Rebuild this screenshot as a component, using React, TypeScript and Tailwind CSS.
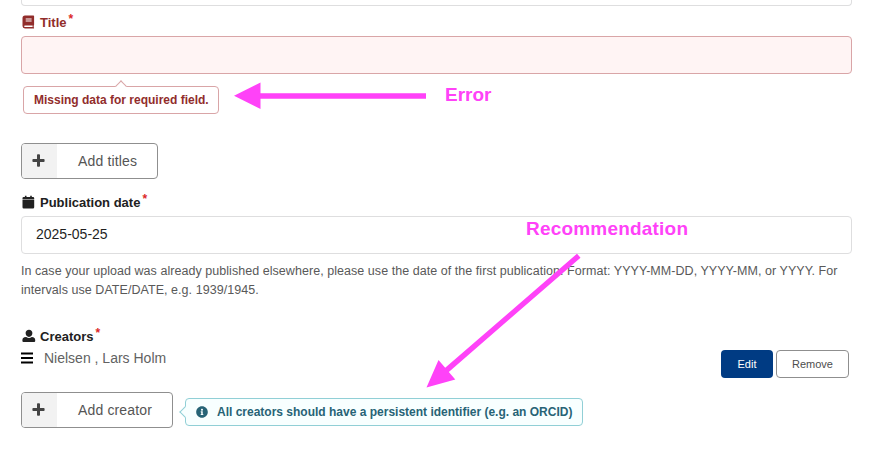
import type { ReactNode } from "react";
import { FaInfoCircle } from "react-icons/fa";

function BookIcon() {
  return (
    <svg width="13" height="14" viewBox="0 0 13 14" fill="currentColor">
      <path fillRule="evenodd" d="M3 .5H11.4Q12.1.5 12.1 1.2V9.8Q12.1 10.3 11.7 10.5V12.2Q12.1 12.4 12.1 12.9T11.5 13.4H3Q.5 13.4.5 11V3Q.5.5 3 .5ZM3.7 3.6V4.5H9.6V3.6ZM3.7 5.6V6.4H9.6V5.6ZM3 10.5Q2.1 10.5 2.1 11.2T3 12H10.6V10.5Z" />
    </svg>
  );
}

function CalendarIcon() {
  return (
    <svg width="13" height="14" viewBox="0 0 13 14" fill="currentColor">
      <path d="M.5 4.6H12.2V12.2Q12.2 13.4 11 13.4H1.7Q.5 13.4.5 12.2ZM.5 3.9V3Q.5 2 1.7 2H2.9V.8H4.5V2H8.2V.8H9.8V2H11Q12.2 2 12.2 3V3.9Z" />
    </svg>
  );
}

function UserIcon() {
  return (
    <svg width="14" height="14" viewBox="0 0 14 14" fill="currentColor">
      <path d="M7 .7C9 .7 10.4 2.2 10.4 4.1S9 8 7 8 3.6 6 3.6 4.1 5 .7 7 .7ZM4.2 7.9Q7 9.9 9.8 7.9L11.3 8.3Q13.2 8.8 13.2 10.8V12Q13.2 13 12.2 13H1.4Q.4 13 .4 12V10.8Q.4 8.8 2.3 8.3Z" />
    </svg>
  );
}

function FieldLabel({ icon, text, className }: { icon: ReactNode; text: ReactNode; className: string }) {
  return (
    <div className={`flex h-5 items-center text-[13px] font-bold leading-5 ${className}`}>
      <span className="flex w-[19px] shrink-0 pb-[2px] pl-px">{icon}</span>
      {text}
      <span className="mb-2 ml-[2px] text-[12px] font-bold leading-3 text-[#db2828]">*</span>
    </div>
  );
}

function AddButton({ children, className }: { children: ReactNode; className: string }) {
  return (
    <button className={`flex h-9 shrink-0 overflow-hidden rounded border border-[#8f8f8f] bg-white ${className}`}>
      <span className="flex h-full w-[35px] items-center justify-center bg-[#f2f2f2] text-[#444]">
        <svg className="mb-px mr-[2px]" width="13" height="13" viewBox="0 0 13 13" fill="currentColor">
          <path d="M5.9.3H7.1Q8 .3 8 1.1V5H11.8Q12.6 5 12.6 5.9V7.1Q12.6 8 11.8 8H8V11.9Q8 12.7 7.1 12.7H5.9Q5 12.7 5 11.9V8H1.2Q.4 8 .4 7.1V5.9Q.4 5 1.2 5H5V1.1Q5 .3 5.9.3Z" />
        </svg>
      </span>
      <span className="flex h-full flex-1 items-center pl-[21px] text-[14px] text-[#555]">{children}</span>
    </button>
  );
}

export default function App() {
  return (
    <div className="relative h-[452px] w-[873px] overflow-hidden bg-white pl-[21px] font-['Liberation_Sans',Arial,sans-serif] text-[#212121]">
      <main className="flex w-[831px] flex-col">
        <div className="h-[6px] rounded-b border border-t-0 border-[#dededf]" />

        <FieldLabel className="mt-[7px] text-[#912d2b]" icon={<BookIcon />} text={<span>Title</span>} />
        <div className="mt-[3px] h-[38px] rounded border border-[#d9a5a7] bg-[#fff4f4]" />

        <div className="relative ml-[2px] mt-3 flex h-7 w-[196px] items-center rounded border border-[#d9a5a7] pl-[10px] text-[12px] font-bold text-[#912d2b]">
          <span className="absolute -top-[5px] left-[93px] h-2 w-2 rotate-45 border-l border-t border-[#d9a5a7] bg-white" />
          <span className="whitespace-nowrap">Missing data for required field.</span>
        </div>

        <AddButton className="mt-[29px] w-[137px]"><span className="tracking-[0.15px]">Add titles</span></AddButton>

        <FieldLabel className="mt-[14px]" icon={<CalendarIcon />} text={<span>Publication date</span>} />
        <div className="mt-[3px] flex h-[38px] items-center rounded border border-[#dededf] pb-px pl-[14px] text-[14px] text-[#1f1f1f]">
          <span>2025-05-25</span>
        </div>

        <div className="mt-2 whitespace-nowrap text-[12.5px] leading-[19px] text-[#595959]">
          <p className="tracking-[0.048px]">In case your upload was already published elsewhere, please use the date of the first publication. Format: YYYY-MM-DD, YYYY-MM, or YYYY. For</p>
          <p className="tracking-[0.048px]">intervals use DATE/DATE, e.g. 1939/1945.</p>
        </div>

        <FieldLabel className="mt-[27px]" icon={<UserIcon />} text={<span>Creators</span>} />

        <div className="mt-[3px] flex h-7 justify-between pr-[3px]">
          <div className="flex h-4 items-center text-[14px] text-[#626262]">
            <svg className="mr-[11px] text-black" width="12" height="12" viewBox="0 0 12 12" fill="currentColor">
              <path d="M0 .5H12V2.5H0ZM0 5H12V7H0ZM0 9.5H12V11.5H0Z" />
            </svg>
            <span>Nielsen , Lars Holm</span>
          </div>
          <div className="flex gap-[3px] text-[11px]">
            <button className="h-7 w-[52px] rounded bg-[#003b83] text-white">Edit</button>
            <button className="h-7 w-[73px] rounded border border-[#8f8f8f] bg-white text-[#4d4d4d]">Remove</button>
          </div>
        </div>

        <div className="mt-[14px] flex items-center">
          <AddButton className="w-[152px]"><span className="tracking-[0.15px]">Add creator</span></AddButton>
          <div className="relative ml-3 mt-1 flex h-7 w-[398px] items-center rounded border border-[#91cfd6] bg-[#f8ffff] pl-[10px] text-[12px] font-bold text-[#276376]">
            <span className="absolute -left-[5px] top-[9px] h-2 w-2 rotate-45 border-b border-l border-[#91cfd6] bg-[#f8ffff]" />
            <FaInfoCircle className="mr-[9px] shrink-0" size={12} />
            <span className="whitespace-nowrap">All creators should have a persistent identifier (e.g. an ORCID)</span>
          </div>
        </div>
      </main>

      <div className="pointer-events-none absolute inset-0 font-bold text-[#ff42f8]">
        <svg className="absolute inset-0" width="873" height="452" fill="#ff42f8">
          <path d="M234 95.7 260.5 82.5V93.3H426V98.7H260.5V109Z" />
          <path d="M426.5 387.5 438.5 360 445.2 367.8 577 253.7 580.5 257.7 448.8 371.9 455.3 379.6Z" />
        </svg>
        <span className="absolute left-[445px] top-[83px] text-[19px] leading-6">Error</span>
        <span className="absolute left-[526px] top-[217px] text-[19px] leading-6 tracking-[0.2px]">Recommendation</span>
      </div>
    </div>
  );
}
